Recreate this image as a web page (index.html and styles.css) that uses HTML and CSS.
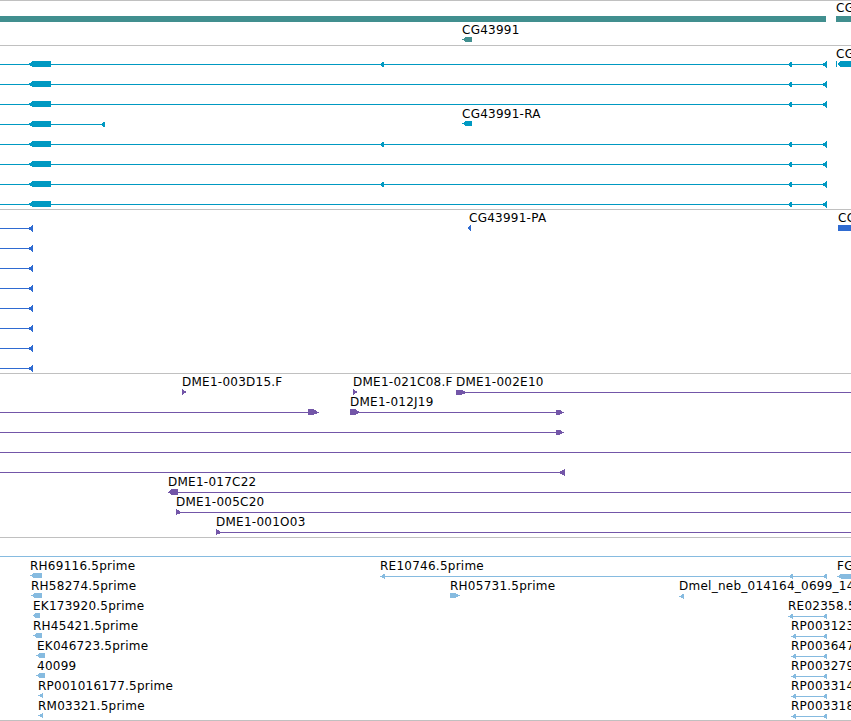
FILE: index.html
```html
<!DOCTYPE html>
<html>
<head>
<meta charset="utf-8">
<title>Tracks</title>
<link rel="stylesheet" href="styles.css">
</head>
<body>
<div class="view">
  <div class="track">
    <svg width="851" height="44" viewBox="0 1 851 44">
      <rect class="gene" x="0" y="16" width="826" height="6"/>
      <rect class="gene" x="836" y="16" width="15" height="6"/>
      <text class="lbl" x="836" y="12">CG18446</text>
      <text class="lbl" x="462" y="34">CG43991</text>
      <polygon class="gene" points="462,39.5 466,37 472,37 472,42 466,42"/>
    </svg>
  </div>

  <div class="track">
    <svg width="851" height="163" viewBox="0 46 851 163">
      <g class="tx">
        <rect x="0" y="64" width="826" height="1"/>
        <rect x="0" y="84" width="826" height="1"/>
        <rect x="0" y="104" width="826" height="1"/>
        <rect x="0" y="124" width="102" height="1"/>
        <rect x="0" y="144" width="826" height="1"/>
        <rect x="0" y="164" width="826" height="1"/>
        <rect x="0" y="184" width="826" height="1"/>
        <rect x="0" y="204" width="826" height="1"/>

        <polygon points="28,64.5 33,61 51,61 51,67 33,67"/>
        <polygon points="28,84.5 33,81 51,81 51,87 33,87"/>
        <polygon points="28,104.5 33,101 51,101 51,107 33,107"/>
        <polygon points="28,124.5 33,121 51,121 51,127 33,127"/>
        <polygon points="28,144.5 33,141 51,141 51,147 33,147"/>
        <polygon points="28,164.5 33,161 51,161 51,167 33,167"/>
        <polygon points="28,184.5 33,181 51,181 51,187 33,187"/>
        <polygon points="28,204.5 33,201 51,201 51,207 33,207"/>

        <polygon points="379,64.5 384,61.5 384,67.5"/>
        <polygon points="379,144.5 384,141.5 384,147.5"/>
        <polygon points="379,184.5 384,181.5 384,187.5"/>

        <polygon points="787,64.5 792,61.5 792,67.5"/>
        <polygon points="787,84.5 792,81.5 792,87.5"/>
        <polygon points="787,104.5 792,101.5 792,107.5"/>
        <polygon points="787,144.5 792,141.5 792,147.5"/>
        <polygon points="787,164.5 792,161.5 792,167.5"/>
        <polygon points="787,184.5 792,181.5 792,187.5"/>
        <polygon points="787,204.5 792,201.5 792,207.5"/>

        <polygon points="822,64.5 827,61 827,68"/>
        <polygon points="822,84.5 827,81 827,88"/>
        <polygon points="822,104.5 827,101 827,108"/>
        <polygon points="822,144.5 827,141 827,148"/>
        <polygon points="822,164.5 827,161 827,168"/>
        <polygon points="822,184.5 827,181 827,188"/>
        <polygon points="822,204.5 827,201 827,208"/>

        <polygon points="100,124.5 105,121.5 105,127.5"/>

        <rect x="836" y="61" width="1" height="6"/>
        <polygon points="837,64 841,61 851,61 851,67 841,67"/>
        <polygon points="462,123.5 466,121 472,121 472,126 466,126"/>
      </g>
      <text class="lbl" x="836" y="58">CG18446-RA</text>
      <text class="lbl" x="462" y="118">CG43991-RA</text>
    </svg>
  </div>

  <div class="track">
    <svg width="851" height="163" viewBox="0 210 851 163">
      <g class="cds">
        <rect x="0" y="228" width="30" height="1"/>
        <rect x="0" y="248" width="30" height="1"/>
        <rect x="0" y="268" width="30" height="1"/>
        <rect x="0" y="288" width="30" height="1"/>
        <rect x="0" y="308" width="30" height="1"/>
        <rect x="0" y="328" width="30" height="1"/>
        <rect x="0" y="348" width="30" height="1"/>
        <rect x="0" y="368" width="30" height="1"/>
        <polygon points="28,228.5 33,225 33,232"/>
        <polygon points="28,248.5 33,245 33,252"/>
        <polygon points="28,268.5 33,265 33,272"/>
        <polygon points="28,288.5 33,285 33,292"/>
        <polygon points="28,308.5 33,305 33,312"/>
        <polygon points="28,328.5 33,325 33,332"/>
        <polygon points="28,348.5 33,345 33,352"/>
        <polygon points="28,368.5 33,365 33,372"/>
        <polygon points="467,228 471,225 471,231"/>
        <rect x="838" y="225" width="13" height="6"/>
      </g>
      <text class="lbl" x="469" y="222">CG43991-PA</text>
      <text class="lbl" x="838" y="222">CG18446-PA</text>
    </svg>
  </div>

  <div class="track">
    <svg width="851" height="163" viewBox="0 374 851 163">
      <g class="clone">
        <polygon points="182,389 187,392 182,395"/>
        <polygon points="353,389 358,392 353,395"/>
        <rect x="456" y="392" width="395" height="1"/>
        <polygon points="456,389.5 461,389.5 467,392.5 461,395 456,395"/>

        <rect x="0" y="412" width="310" height="1"/>
        <polygon points="308,409 313,409 319,412.5 313,415 308,415"/>
        <rect x="350" y="412" width="208" height="1"/>
        <polygon points="350,409 355,409 360,412.5 355,415 350,415"/>
        <polygon points="556,409.5 559,409.5 564,412.5 559,415 556,415"/>

        <rect x="0" y="432" width="558" height="1"/>
        <polygon points="556,429.5 559,429.5 564,432.5 559,435 556,435"/>

        <rect x="0" y="452" width="851" height="1"/>

        <rect x="0" y="472" width="560" height="1"/>
        <polygon points="558,472.5 565,469 565,476"/>

        <rect x="168" y="492" width="683" height="1"/>
        <polygon points="168,492 172,489 178,489 178,495 172,495"/>

        <rect x="176" y="512" width="675" height="1"/>
        <polygon points="176,509 182,512.5 176,515"/>

        <rect x="216" y="532" width="635" height="1"/>
        <polygon points="216,529 222,532.5 216,535"/>
      </g>
      <text class="lbl" x="182" y="386">DME1-003D15.F</text>
      <text class="lbl" x="353" y="386">DME1-021C08.F</text>
      <text class="lbl" x="456" y="386">DME1-002E10</text>
      <text class="lbl" x="350" y="406">DME1-012J19</text>
      <text class="lbl" x="168" y="486">DME1-017C22</text>
      <text class="lbl" x="176" y="506">DME1-005C20</text>
      <text class="lbl" x="216" y="526">DME1-001O03</text>
    </svg>
  </div>

  <div class="track last">
    <svg width="851" height="182" viewBox="0 538 851 182">
      <g class="est">
        <rect x="0" y="556" width="851" height="1"/>

        <polygon points="30,575.5 34,573 42,573 42,578 34,578"/>
        <polygon points="31,595.5 35,593 42,593 42,598 35,598"/>
        <polygon points="33,615.5 36,613 40,613 40,618 36,618"/>
        <polygon points="33,635.5 37,633 42,633 42,638 37,638"/>
        <polygon points="36,655.5 40,653 45,653 45,658 40,658"/>
        <polygon points="36,675.5 40,673 45,673 45,678 40,678"/>
        <polygon points="38,695.5 43,693 43,698"/>
        <polygon points="38,715.5 43,713 43,718"/>

        <rect x="380" y="576" width="446" height="1"/>
        <polygon points="380,576.5 385,573.5 385,579"/>
        <polygon points="788,576.5 793,573.5 793,579"/>
        <polygon points="822,576.5 827,573.5 827,579"/>
        <polygon points="837,576.5 842,573.5 842,579"/>
        <polygon points="842,573.5 851,573.5 851,579 842,579"/>

        <polygon points="450,593 455,593 460,595.5 455,598 450,598"/>
        <polygon points="679,596.5 684,593.5 684,599"/>

        <rect x="788" y="616" width="38" height="1"/>
        <polygon points="788,616.5 793,613.5 793,619"/>
        <polygon points="822,616.5 827,613.5 827,619"/>
        <rect x="791" y="636" width="35" height="1"/>
        <polygon points="791,636.5 796,633.5 796,639"/>
        <polygon points="822,636.5 827,633.5 827,639"/>
        <rect x="791" y="656" width="35" height="1"/>
        <polygon points="791,656.5 796,653.5 796,659"/>
        <polygon points="822,656.5 827,653.5 827,659"/>
        <rect x="791" y="676" width="35" height="1"/>
        <polygon points="791,676.5 796,673.5 796,679"/>
        <polygon points="822,676.5 827,673.5 827,679"/>
        <rect x="791" y="696" width="35" height="1"/>
        <polygon points="791,696.5 796,693.5 796,699"/>
        <polygon points="822,696.5 827,693.5 827,699"/>
        <rect x="791" y="716" width="35" height="1"/>
        <polygon points="791,716.5 796,713.5 796,719"/>
        <polygon points="822,716.5 827,713.5 827,719"/>
      </g>
      <text class="lbl" x="30" y="570">RH69116.5prime</text>
      <text class="lbl" x="31" y="590">RH58274.5prime</text>
      <text class="lbl" x="33" y="610">EK173920.5prime</text>
      <text class="lbl" x="33" y="630">RH45421.5prime</text>
      <text class="lbl" x="37" y="650">EK046723.5prime</text>
      <text class="lbl" x="37" y="670">40099</text>
      <text class="lbl" x="38" y="690">RP001016177.5prime</text>
      <text class="lbl" x="38" y="710">RM03321.5prime</text>
      <text class="lbl" x="380" y="570">RE10746.5prime</text>
      <text class="lbl" x="450" y="590">RH05731.5prime</text>
      <text class="lbl" x="679" y="590">Dmel_neb_014164_0699_14.5prime</text>
      <text class="lbl" x="788" y="610">RE02358.5prime</text>
      <text class="lbl" x="791" y="630">RP003123.5prime</text>
      <text class="lbl" x="791" y="650">RP003647.5prime</text>
      <text class="lbl" x="791" y="670">RP003279.5prime</text>
      <text class="lbl" x="791" y="690">RP003314.5prime</text>
      <text class="lbl" x="791" y="710">RP003318.5prime</text>
      <text class="lbl" x="837" y="570">FG01234.5prime</text>
    </svg>
  </div>
</div>
</body>
</html>
```

FILE: styles.css
```css
html, body {
  margin: 0;
  padding: 0;
  background: #ffffff;
}

.view {
  width: 851px;
  height: 721px;
  overflow: hidden;
  display: flex;
  flex-direction: column;
}

.track {
  border-top: 1px solid #c0c0c0;
  flex: 0 0 auto;
}

.track.last {
  border-bottom: 1px solid #c0c0c0;
}

.track svg {
  display: block;
  overflow: hidden;
  shape-rendering: crispEdges;
}

.lbl {
  font-family: "DejaVu Sans", sans-serif;
  font-size: 12px;
  letter-spacing: 0.25px;
  fill: #000000;
}

.gene { fill: #418f8f; }
.tx { fill: #0099c2; }
.cds { fill: #2f6bd1; }
.clone { fill: #7356a8; }
.est { fill: #86bbe0; }
```
